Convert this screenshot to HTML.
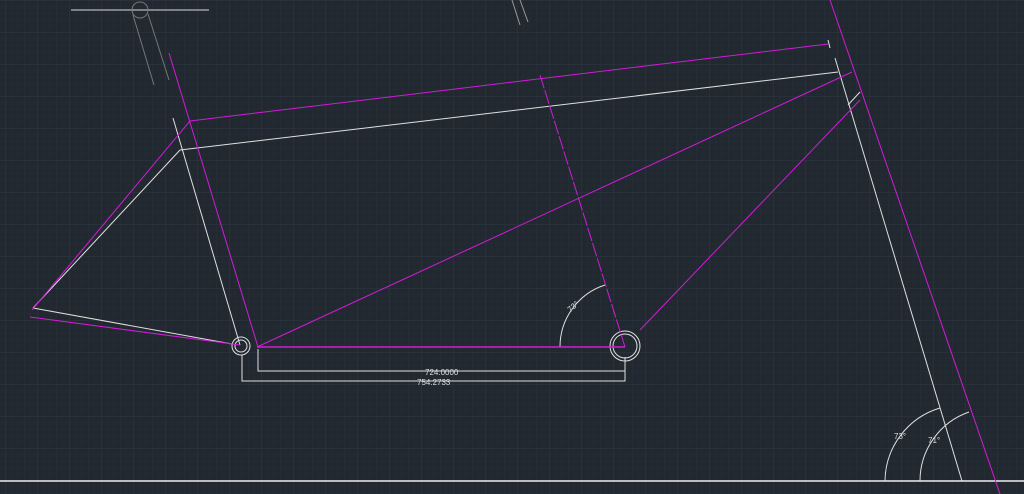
<!DOCTYPE html>
<html><head><style>
html,body{margin:0;padding:0;background:#212830;}
svg{display:block}
text{font-family:"Liberation Sans",sans-serif;font-size:8px;fill:#d8dde2}
</style></head><body>
<svg width="1024" height="494" viewBox="0 0 1024 494">
<defs>
<pattern id="mn" width="6.4" height="6.4" patternUnits="userSpaceOnUse" x="5" y="0">
<path d="M0 0H6.4M0 0V6.4" stroke="#262e37" stroke-width="1"/></pattern>
<pattern id="mj" width="32" height="32" patternUnits="userSpaceOnUse" x="5" y="0">
<path d="M0 0H32M0 0V32" stroke="#2e3744" stroke-width="1"/></pattern>
</defs>
<rect width="1024" height="494" fill="#212830"/>
<rect width="1024" height="494" fill="url(#mn)"/>
<rect width="1024" height="494" fill="url(#mj)"/>
<g fill="none" stroke-width="1">
<!-- grey top-left -->
<line x1="71" y1="10" x2="209" y2="10" stroke="#dcdcdc"/>
<circle cx="140" cy="10" r="8" stroke="#777"/>
<line x1="133" y1="15" x2="154" y2="85" stroke="#777"/>
<line x1="148" y1="14" x2="169" y2="80" stroke="#777"/>
<line x1="512" y1="0" x2="520" y2="25" stroke="#999"/>
<line x1="520" y1="0" x2="528" y2="22" stroke="#999"/>
<!-- white -->
<g stroke="#e0e0e0">
<line x1="180" y1="150" x2="838" y2="72"/>
<line x1="180" y1="150" x2="33" y2="308"/>
<line x1="33" y1="308" x2="232" y2="344"/>
<line x1="173" y1="118" x2="240" y2="345"/>
<line x1="828" y1="40" x2="830" y2="48"/>
<line x1="835" y1="58" x2="962" y2="481"/>
<line x1="0" y1="481" x2="1024" y2="481" stroke="#ececec" stroke-width="1.5"/>
<polyline points="242,355 242,381 625,381 625,357"/>
<polyline points="258,349 258,371 625,371"/>
<circle cx="241" cy="346" r="9"/>
<circle cx="241" cy="346" r="6"/>
<circle cx="625" cy="346" r="15"/>
<circle cx="625" cy="346" r="12"/>
<path d="M560 347 A65 65 0 0 1 605 285"/>
<path d="M885 481 A77 77 0 0 1 940 408"/>
<path d="M920 481 A73 73 0 0 1 969 412"/>
<line x1="848" y1="105" x2="860" y2="92"/>
</g>
<!-- magenta -->
<g stroke="#d21bd8">
<line x1="169" y1="53" x2="258" y2="347"/>
<line x1="190" y1="121" x2="828" y2="44"/>
<line x1="190" y1="121" x2="32" y2="310"/>
<line x1="30" y1="317" x2="240" y2="345"/>
<line x1="257" y1="347" x2="852" y2="72"/>
<line x1="257" y1="347" x2="625" y2="347" stroke-width="1.5"/>
<line x1="540" y1="75" x2="625" y2="347" stroke-dasharray="14 2"/>
<line x1="640" y1="330" x2="860" y2="100"/>
<line x1="830" y1="0" x2="1000" y2="494"/>
</g>
</g>
<text x="425" y="375">724.0000</text>
<text x="417" y="385">754.2733</text>
<text x="567" y="310" transform="rotate(-40 572 307)">73°</text>
<text x="894" y="439">73°</text>
<text x="928" y="443">71°</text>
</svg>
</body></html>
